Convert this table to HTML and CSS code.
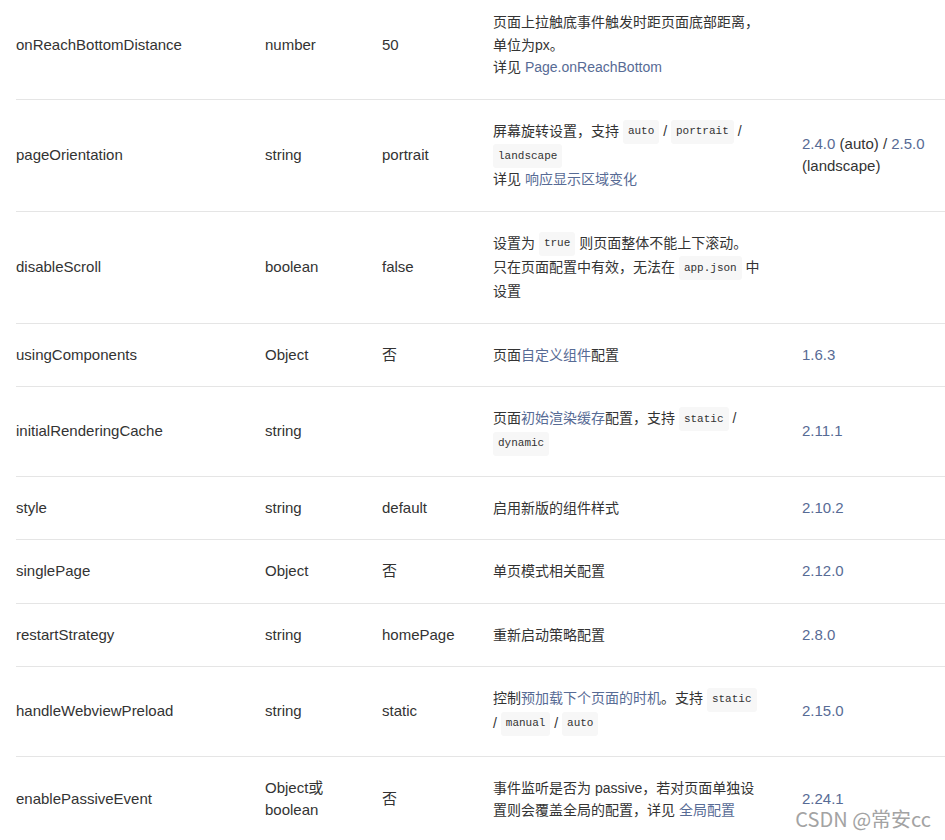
FILE: index.html
```html
<!DOCTYPE html>
<html lang="zh-CN">
<head>
<meta charset="utf-8">
<title>页面配置</title>
<link rel="stylesheet" href="styles.css">
</head>
<body>
<div class="page">
  <table class="conf">
    <colgroup>
      <col class="c-name"><col class="c-type"><col class="c-def"><col class="c-desc"><col class="c-ver">
    </colgroup>
    <tbody>
      <tr>
        <td>onReachBottomDistance</td>
        <td>number</td>
        <td>50</td>
        <td class="desc">页面上拉触底事件触发时距页面底部距离，单位为px。<br>详见 <a>Page.onReachBottom</a></td>
        <td></td>
      </tr>
      <tr>
        <td>pageOrientation</td>
        <td>string</td>
        <td>portrait</td>
        <td class="desc">屏幕旋转设置，支持 <code>auto</code> / <code>portrait</code> / <code>landscape</code><br>详见 <a>响应显示区域变化</a></td>
        <td><a>2.4.0</a> (auto) / <a>2.5.0</a> (landscape)</td>
      </tr>
      <tr>
        <td>disableScroll</td>
        <td>boolean</td>
        <td>false</td>
        <td class="desc">设置为 <code>true</code> 则页面整体不能上下滚动。<br>只在页面配置中有效，无法在 <code>app.json</code> 中设置</td>
        <td></td>
      </tr>
      <tr>
        <td>usingComponents</td>
        <td>Object</td>
        <td>否</td>
        <td class="desc">页面<a>自定义组件</a>配置</td>
        <td><a>1.6.3</a></td>
      </tr>
      <tr>
        <td>initialRenderingCache</td>
        <td>string</td>
        <td></td>
        <td class="desc">页面<a>初始渲染缓存</a>配置，支持 <code>static</code> / <code>dynamic</code></td>
        <td><a>2.11.1</a></td>
      </tr>
      <tr>
        <td>style</td>
        <td>string</td>
        <td>default</td>
        <td class="desc">启用新版的组件样式</td>
        <td><a>2.10.2</a></td>
      </tr>
      <tr>
        <td>singlePage</td>
        <td>Object</td>
        <td>否</td>
        <td class="desc">单页模式相关配置</td>
        <td><a>2.12.0</a></td>
      </tr>
      <tr>
        <td>restartStrategy</td>
        <td>string</td>
        <td>homePage</td>
        <td class="desc">重新启动策略配置</td>
        <td><a>2.8.0</a></td>
      </tr>
      <tr>
        <td>handleWebviewPreload</td>
        <td>string</td>
        <td>static</td>
        <td class="desc">控制<a>预加载下个页面的时机</a>。支持 <code>static</code> / <code>manual</code> / <code>auto</code></td>
        <td><a>2.15.0</a></td>
      </tr>
      <tr>
        <td>enablePassiveEvent</td>
        <td>Object或 boolean</td>
        <td>否</td>
        <td class="desc">事件监听是否为 passive，若对页面单独设置则会覆盖全局的配置，详见 <a>全局配置</a></td>
        <td><a>2.24.1</a></td>
      </tr>
    </tbody>
  </table>
  <div class="watermark">CSDN @常安cc</div>
</div>
</body>
</html>
```

FILE: styles.css
```css
html, body {
  margin: 0;
  padding: 0;
  background: #fff;
  overflow: hidden;
}

.page {
  position: relative;
  width: 945px;
  height: 840px;
  overflow: hidden;
  font-family: "Liberation Sans", "Noto Sans CJK SC", sans-serif;
  color: #333;
}

.conf {
  border-collapse: collapse;
  table-layout: fixed;
  width: 970px;
  margin: -9px 0 0 16px;
  font-size: 15px;
  line-height: 22.5px;
}

.c-name { width: 233px; }
.c-type { width: 117px; }
.c-def  { width: 111px; }
.c-desc { width: 309px; }
.c-ver  { width: 200px; }

.conf td {
  padding: 20px 16px;
  border-bottom: 1px solid #e5e5e5;
  vertical-align: middle;
  text-align: left;
  word-wrap: break-word;
}

.conf td:first-child {
  padding-left: 0;
}

.conf td.desc {
  font-size: 14px;
  line-height: 22.5px;
  padding-right: 25px;
}

.conf a {
  color: #576b95;
  text-decoration: none;
}

.conf code {
  display: inline-block;
  font-family: "Liberation Mono", "DejaVu Sans Mono", monospace;
  font-size: 11px;
  line-height: 15px;
  padding: 4.5px 5px;
  background: #f7f7f7;
  border-radius: 3px;
  color: #333;
  vertical-align: middle;
}

.watermark {
  position: absolute;
  right: 14px;
  bottom: 9px;
  font-family: "Noto Sans CJK SC", sans-serif;
  font-size: 20px;
  line-height: 24px;
  color: #a3a3a3;
  text-shadow: 0 0 1px #fff;
}
```
